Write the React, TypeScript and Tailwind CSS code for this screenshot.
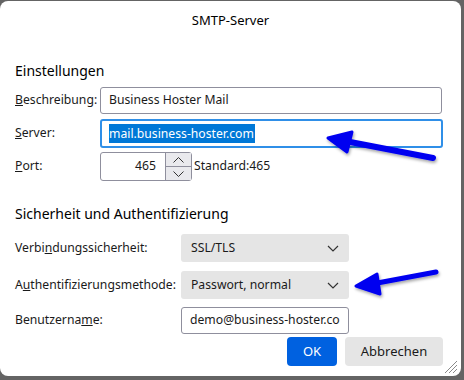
export default function App() {
  const font = { fontFamily: '"Noto Sans", "Open Sans", sans-serif' }
  return (
    <div className="w-[464px] h-[380px] bg-[#646464] overflow-hidden relative" style={font}>
      <div className="w-[461px] h-[375px] mt-px bg-white rounded-[8px] relative text-[12.2px] text-[#1a1a1a]">
        {/* Title */}
        <div className="h-[39px] flex items-center justify-center text-[13px] text-black">SMTP-Server</div>

        <div className="pl-[15px]">
          <div className="mt-[21px] h-[20px] leading-[20px] text-[14px] text-black">Einstellungen</div>

          <div className="mt-[6px] flex items-center h-[27px]">
            <label className="w-[85px]"><u>B</u>eschreibung:</label>
            <div className="w-[342px] h-[27px] border border-[#8f8f9d] rounded-[3px] flex items-center px-[8px]">
              Business Hoster Mail
            </div>
          </div>

          <div className="mt-[5px] flex items-center h-[29px]">
            <label className="w-[85px]"><u>S</u>erver:</label>
            <div className="w-[343px] h-[29px] border-2 border-[#2f8fe8] rounded-[3px] flex items-center px-[7px]">
              <span className="bg-[#0078d7] text-white leading-[19px] pr-px">mail.business-hoster.com</span>
            </div>
          </div>

          <div className="mt-[4px] flex items-center h-[29px]">
            <label className="w-[85px]"><u>P</u>ort:</label>
            <div className="w-[92px] h-[29px] border border-[#8f8f9d] rounded-[3px] flex items-center">
              <span className="flex-1 text-right pr-[9px]">465</span>
              <div className="w-[26px] h-[27px] flex flex-col border-l border-[#8f8f9d]">
                <div className="flex-1 bg-[#e9e9ed] flex items-center justify-center border-b border-[#8f8f9d]">
                  <svg width="11" height="6" viewBox="0 0 11 6" fill="none" stroke="#333" strokeWidth="1"><path d="M0.5 5.5 L5.5 0.5 L10.5 5.5" /></svg>
                </div>
                <div className="flex-1 bg-[#e9e9ed] flex items-center justify-center">
                  <svg width="11" height="6" viewBox="0 0 11 6" fill="none" stroke="#333" strokeWidth="1"><path d="M0.5 0.5 L5.5 5.5 L10.5 0.5" /></svg>
                </div>
              </div>
            </div>
            <span className="ml-[2px]">Standard:465</span>
          </div>

          <div className="mt-[23px] h-[20px] leading-[20px] text-[14px] text-black">Sicherheit und Authentifizierung</div>

          <div className="mt-[10px] flex items-center h-[28px]">
            <label className="w-[166px]">Verbi<u>n</u>dungssicherheit:</label>
            <div className="w-[168px] h-[28px] bg-[#e5e5e5] rounded-[3px] flex items-center justify-between pl-[10px] pr-[10px]">
              <span>SSL/TLS</span>
              <svg width="12" height="7" viewBox="0 0 12 7" fill="none" stroke="#333" strokeWidth="1.2"><path d="M1 1 L6 6 L11 1" /></svg>
            </div>
          </div>

          <div className="mt-[9px] flex items-center h-[28px]">
            <label className="w-[166px]">A<u>u</u>thentifizierungsmethode:</label>
            <div className="w-[168px] h-[28px] bg-[#e5e5e5] rounded-[3px] flex items-center justify-between pl-[10px] pr-[10px]">
              <span>Passwort, normal</span>
              <svg width="12" height="7" viewBox="0 0 12 7" fill="none" stroke="#333" strokeWidth="1.2"><path d="M1 1 L6 6 L11 1" /></svg>
            </div>
          </div>

          <div className="mt-[8px] flex items-center h-[27px]">
            <label className="w-[166px]">Benutzerna<u>m</u>e:</label>
            <div className="w-[168px] h-[27px] border border-[#8f8f9d] rounded-[3px] flex items-center pl-[8px] pr-[8px]">
              <span className="block w-full overflow-hidden whitespace-nowrap">demo@business-hoster.com</span>
            </div>
          </div>

          <div className="mt-[3px] flex justify-end gap-[8px] pr-[18px]">
            <button className="w-[50px] h-[29px] rounded-[4px] bg-[#0061e0] text-white text-[13px]">OK</button>
            <button className="w-[98px] h-[29px] rounded-[4px] bg-[#e5e5e5] text-[#1a1a1a] text-[13px]">Abbrechen</button>
          </div>
        </div>

        {/* Resize grip */}
        <svg className="absolute right-[3px] bottom-[2px]" width="14" height="14" viewBox="0 0 14 14" stroke="#8a8a8a" strokeWidth="1">
          <path d="M1 13 L13 1 M5 13 L13 5 M9 13 L13 9" />
        </svg>

        {/* Annotation arrows */}
        <svg className="absolute left-0 top-0 pointer-events-none" width="461" height="376" viewBox="0 0 461 376">
          <defs>
            <filter id="sh" x="-20%" y="-50%" width="140%" height="200%">
              <feDropShadow dx="1" dy="2" stdDeviation="1.5" floodColor="#000" floodOpacity="0.35" />
            </filter>
          </defs>
          <g fill="#0000f0" stroke="#0000f0" strokeLinecap="round" strokeLinejoin="round" filter="url(#sh)">
            <path d="M433 157 L345 140" strokeWidth="6" fill="none" />
            <path d="M328 137 L352 131 L347 151 Z" strokeWidth="3" />
            <path d="M436 271 L372 283" strokeWidth="5" fill="none" />
            <path d="M356 285 L377 273 L380 293 Z" strokeWidth="3" />
          </g>
        </svg>
      </div>
    </div>
  )
}
